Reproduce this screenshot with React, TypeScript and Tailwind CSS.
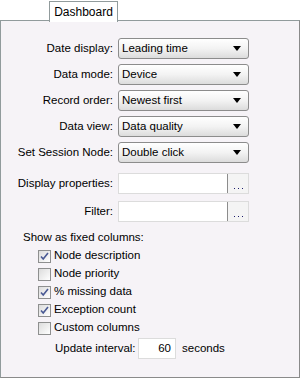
import React from 'react';

const font = { fontFamily: '"Liberation Sans", Arial, sans-serif' };

function Select({ value }: { value: string }) {
  return (
    <div className="flex items-center h-[21px] w-[131px] rounded-[3px] border border-[#8c8c8c] bg-gradient-to-b from-white via-[#f3f3f3] to-[#dcdcdc] pl-[3px] pr-[7px]">
      <span className="flex-1 text-[#000]">{value}</span>
      <svg width="8" height="5" viewBox="0 0 8 5"><path d="M0 0h8L4 5z" fill="#000" /></svg>
    </div>
  );
}

function Browse() {
  return (
    <div className="flex h-[21px] w-[131px] border border-[#dcdcdc] bg-white">
      <div className="flex-1" />
      <div className="w-[21px] h-[19px] border-l border-[#8c8c8c] bg-[#f4f4f4] flex items-end justify-center pb-[4px]">
        <svg width="9" height="1" viewBox="0 0 9 1"><path d="M0 0h1v1H0zM4 0h1v1H4zM8 0h1v1H8z" fill="#1c1c6c" /></svg>
      </div>
    </div>
  );
}

function Check({ on, label }: { on: boolean; label: string }) {
  return (
    <div className="flex items-center h-[18px] gap-[3px]">
      <div className="w-[13px] h-[13px] border border-[#8e8f8f] bg-gradient-to-br from-[#dcdcdc] to-white flex items-center justify-center">
        {on && (
          <svg width="9" height="9" viewBox="0 0 9 9">
            <path d="M1 4.5l2.2 2.5L8 1" stroke="#4a5a94" strokeWidth="1.6" fill="none" />
          </svg>
        )}
      </div>
      <span>{label}</span>
    </div>
  );
}

const rows: [string, string][] = [
  ['Date display:', 'Leading time'],
  ['Data mode:', 'Device'],
  ['Record order:', 'Newest first'],
  ['Data view:', 'Data quality'],
  ['Set Session Node:', 'Double click'],
];

export default function App() {
  return (
    <div className="w-[301px] h-[379px] bg-white text-[11.5px] text-black" style={font}>
      {/* Tab */}
      <div className="flex pl-[49px] pt-[1px] h-[21px] relative z-10">
        <div className="w-[69px] h-[21px] border border-b-0 border-[#919b9c] bg-white flex items-center justify-center text-[12px] pb-[1px]">
          Dashboard
        </div>
      </div>

      {/* Panel */}
      <div className="-mt-px w-[300px] h-[358px] border border-[#919b9c] border-r-[#8a8a8a] border-b-[#8a8a8a] bg-[#f6f3f7] pt-[17px]">
        <div className="grid grid-cols-[112px_131px] gap-x-[5px] gap-y-[5px] items-center">
          {rows.map(([label, value]) => (
            <React.Fragment key={label}>
              <span className="text-right whitespace-nowrap">{label}</span>
              <Select value={value} />
            </React.Fragment>
          ))}
          <span className="text-right whitespace-nowrap mt-[5px]">Display properties:</span>
          <div className="mt-[5px]"><Browse /></div>
          <span className="text-right mt-[2px]">Filter:</span>
          <div className="mt-[2px]"><Browse /></div>
        </div>

        <div className="pl-[22px] mt-[7px]">
          <div className="h-[16px]">Show as fixed columns:</div>
          <div className="pl-[15px] mt-[2px]">
            <Check on label="Node description" />
            <Check on={false} label="Node priority" />
            <Check on label="% missing data" />
            <Check on label="Exception count" />
            <Check on={false} label="Custom columns" />
            <div className="flex items-center mt-[1px] pl-[17px]">
              <span className="w-[83px] whitespace-nowrap">Update interval:</span>
              <div className="w-[38px] h-[21px] border border-[#dcdcdc] bg-white text-right pr-[4px] leading-[19px]">60</div>
              <span className="ml-[6px]">seconds</span>
            </div>
          </div>
        </div>
      </div>
    </div>
  );
}
